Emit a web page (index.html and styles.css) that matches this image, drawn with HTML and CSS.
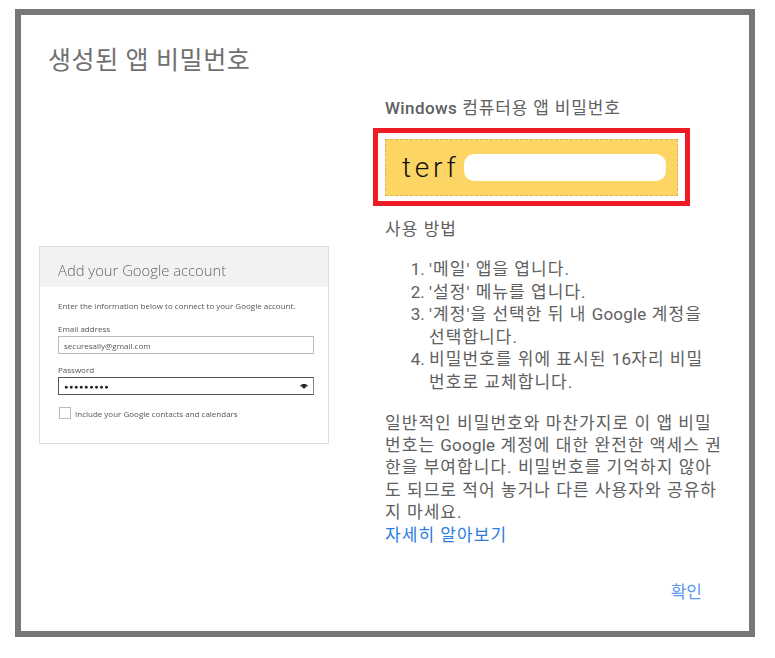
FILE: index.html
```html
<!doctype html>
<html lang="ko">
<head>
  <meta charset="utf-8">
  <title>생성된 앱 비밀번호</title>
  <link rel="stylesheet" href="styles.css">
</head>
<body>
  <div class="dialog">
    <h1 class="title">생성된 앱 비밀번호</h1>

    <div class="columns">
      <div class="left">
        <div class="shot">
          <div class="shot-head">Add your Google account</div>
          <div class="shot-body">
            <p class="shot-intro">Enter the information below to connect to your Google account.</p>
            <div class="shot-label">Email address</div>
            <div class="shot-input">securesally@gmail.com</div>
            <div class="shot-label shot-label-pw">Password</div>
            <div class="shot-input shot-input-pw">
              <span class="shot-dots">●●●●●●●●●</span>
              <svg class="shot-eye" width="8" height="6" viewBox="0 0 10 7">
                <path d="M0 3.4C2.6 .4 7.4 .4 10 3.4L8.6 4.4C6.8 2.6 3.2 2.6 1.4 4.4Z" fill="#222"/>
                <circle cx="5" cy="4.4" r="2.2" fill="#222"/>
              </svg>
            </div>
            <div class="shot-check">
              <span class="shot-box"></span>
              <span>Include your Google contacts and calendars</span>
            </div>
          </div>
        </div>
      </div>

      <div class="right">
        <h2 class="device"><b class="latin-bold">Windows</b> 컴퓨터용 앱 비밀번호</h2>

        <div class="redbox">
          <div class="code">
            <span class="code-text">terf</span>
            <span class="code-mask"></span>
          </div>
        </div>

        <p class="howto">사용 방법</p>

        <ol class="steps">
          <li>'메일' 앱을 엽니다.</li>
          <li>'설정' 메뉴를 엽니다.</li>
          <li>'계정'을 선택한 뒤 내 <span class="latin">Google</span> 계정을 선택합니다.</li>
          <li>비밀번호를 위에 표시된 <span class="latin">16</span>자리 비밀번호로 교체합니다.</li>
        </ol>

        <p class="note">일반적인 비밀번호와 마찬가지로 이 앱 비밀번호는 <span class="latin">Google</span> 계정에 대한 완전한 액세스 권한을 부여합니다. 비밀번호를 기억하지 않아도 되므로 적어 놓거나 다른 사용자와 공유하지 마세요.</p>
        <a class="more" href="#">자세히 알아보기</a>
      </div>
    </div>

    <div class="actions">
      <a class="ok" href="#">확인</a>
    </div>
  </div>
</body>
</html>
```

FILE: styles.css
```css
body {
  background: white;
  color: #606060;
  font-family: 'Roboto', 'Noto Sans CJK KR', sans-serif;
  margin: 0;
  padding: 9px 20px 21px 15px;
}

h1, h2, p {
  font-weight: normal;
  margin: 0;
}

.dialog {
  background: white;
  border: 6px solid #777;
  box-sizing: border-box;
  height: 628px;
  padding: 28px 0 0 18px;
}

.title {
  color: #707070;
  font-size: 25px;
  letter-spacing: 0.6px;
  line-height: 36px;
  margin-left: 9px;
}

.columns {
  display: flex;
  margin-top: 17px;
}

.left {
  padding-top: 150px;
  width: 346px;
}

/* The sample picture is soft in the original, a scaled down capture. */
.shot {
  border: 1px solid #ddd;
  box-sizing: border-box;
  filter: blur(0.4px);
  height: 198px;
  width: 290px;
}

.shot-head {
  background: #f2f2f2;
  color: #666;
  font-family: 'Open Sans', sans-serif;
  font-size: 14.8px;
  font-weight: 300;
  line-height: 34px;
  padding: 6px 0 0 18px;
}

.shot-body {
  color: #555;
  font-family: 'Open Sans', sans-serif;
  font-size: 8px;
  padding: 13px 14px 0 18px;
}

.shot-intro {
  line-height: 12px;
}

.shot-label {
  line-height: 11px;
  margin-top: 11px;
}

.shot-label-pw {
  margin-top: 10px;
}

.shot-input {
  align-items: center;
  border: 1px solid #bbb;
  box-sizing: border-box;
  display: flex;
  height: 18px;
  justify-content: space-between;
  margin-top: 2px;
  padding: 0 5px;
}

.shot-input-pw {
  border-color: #555;
  border-right-color: #888;
}

.shot-dots {
  color: #222;
  font-size: 7px;
  letter-spacing: 0.8px;
}

.shot-check {
  align-items: center;
  display: flex;
  gap: 4px;
  margin-top: 12px;
  padding-left: 1px;
}

.shot-box {
  border: 1px solid #bbb;
  box-sizing: border-box;
  height: 12px;
  width: 12px;
}

.right {
  letter-spacing: 1.05px;
  width: 340px;
}

/* Latin words run tighter than the hangul around them. */
.latin {
  display: inline-block;
  letter-spacing: 0.2px;
  line-height: 1;
}

.device {
  font-size: 17px;
  letter-spacing: 0.85px;
  line-height: 24px;
}

.latin-bold {
  display: inline-block;
  font-weight: 500;
  letter-spacing: 0.4px;
  line-height: 1;
}

.redbox {
  border: 5px solid #ed1c24;
  box-sizing: border-box;
  height: 78px;
  margin: 8px 0 0 -12px;
  padding: 6px 7px;
  width: 317px;
}

.code {
  align-items: center;
  background: #fdd564;
  border: 1px dashed #d9b85a;
  box-sizing: border-box;
  display: flex;
  height: 57px;
  padding: 0 11px 0 16px;
}

.code-text {
  color: #111;
  font-family: 'Roboto', sans-serif;
  font-size: 28px;
  font-weight: 300;
  letter-spacing: 3.8px;
  width: 62px;
}

.code-mask {
  background: white;
  border-radius: 10px;
  flex: 1;
  height: 27px;
}

.howto {
  font-size: 17px;
  line-height: 24px;
  margin-top: 11px;
}

.steps {
  font-size: 17px;
  line-height: 22.6px;
  margin: 17px 0 0;
  padding: 0 20px 0 44px;
}

.steps li::marker {
  letter-spacing: 0;
}

.note {
  font-size: 17px;
  line-height: 22.4px;
  margin-top: 18px;
  width: 338px;
}

.more {
  color: #2b7de0;
  display: block;
  font-size: 17px;
  line-height: 22px;
  text-decoration: none;
}

.actions {
  margin-top: 34px;
  padding-right: 47px;
  text-align: right;
}

.ok {
  color: #5b9bf0;
  font-size: 17px;
  line-height: 24px;
  text-decoration: none;
}
```
